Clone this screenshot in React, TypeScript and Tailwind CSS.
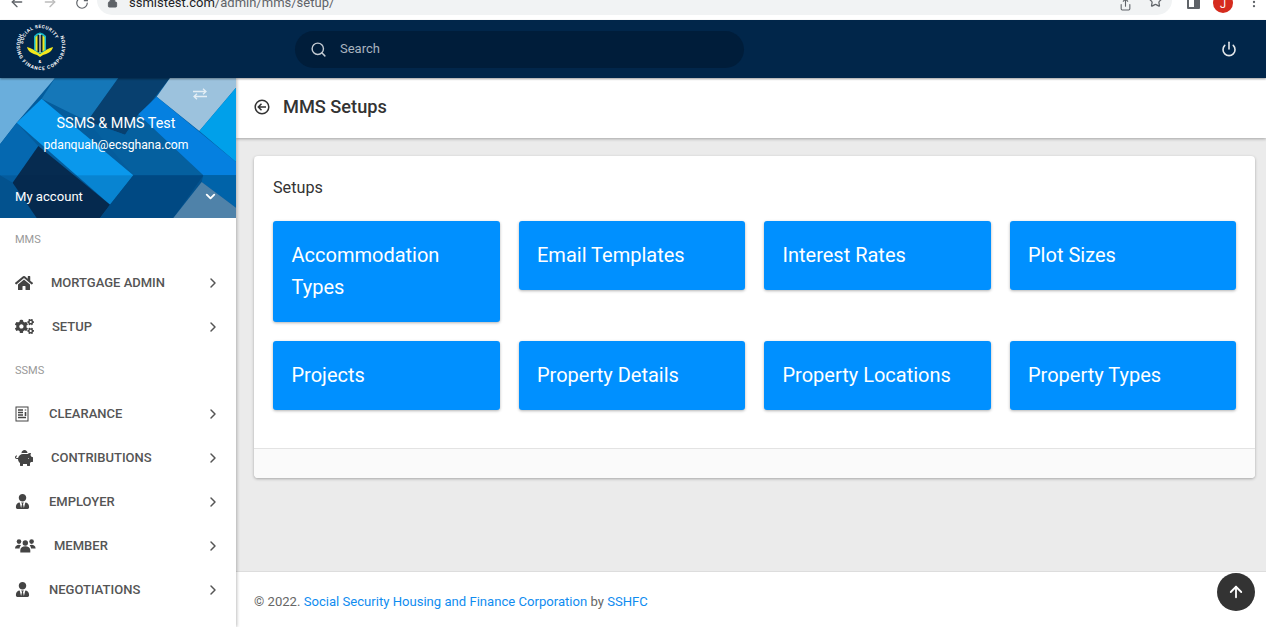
import React from "react";
import { FaHome, FaCogs, FaPiggyBank, FaUserTie } from "react-icons/fa";
import { ArrowUp, ChevronRight, ChevronDown, Search, Power, ArrowLeft, ArrowRight, RotateCw, Lock, Star, Share, MoreVertical } from "lucide-react";

function Logo() {
  return (
    <svg width="56" height="56" viewBox="0 0 56 56">
      <defs>
        <path id="outerRing" d="M8 12 A24.500 24.500 0 1 0 51 14" />
        <path id="topRing" d="M11 24 A17 17 0 0 1 45 24" />
      </defs>
      <path d="M15 26 C19 27 23 29 28 33 C33 29 37 27 41 26 C40 31 35 33 31 34 L28 36 L25 34 C21 33 16 31 15 26Z" fill="#f4e81c" />
      <path d="M22 29 V15 Q28 8 34 15 V29 L28 33Z" fill="#19b6c9" />
      <path d="M23.500 29 V16 Q28 11 32.500 16 V29 L28 32Z" fill="#f4e81c" />
      <rect x="25.500" y="14" width="5" height="17" fill="#0b1f2a" />
      <rect x="27.400" y="13" width="1.200" height="18" fill="#e8e8e8" />
      <text fontFamily="Roboto, sans-serif" fontSize="4.600" fontWeight="700" fill="#ffffff" letterSpacing="0.5">
        <textPath href="#topRing" startOffset="1">SOCIAL SECURITY</textPath>
      </text>
      <text fontFamily="Roboto, sans-serif" fontSize="4.800" fontWeight="700" fill="#ffffff" letterSpacing="0.9">
        <textPath href="#outerRing" startOffset="1">HOUSING FINANCE CORPORATION</textPath>
      </text>
      <text x="28" y="42" textAnchor="middle" fontFamily="Roboto, sans-serif" fontSize="4.400" fontWeight="700" fill="#ffffff">&amp;</text>
    </svg>
  );
}

function Banner() {
  return (
    <svg className="absolute inset-0" width="236" height="140" viewBox="0 0 708 420" preserveAspectRatio="none">
      <rect width="708" height="420" fill="#045c9c" />
      <polygon points="0,0 165,0 50,134 0,199" fill="#6aaedc" />
      <polygon points="165,0 355,0 262,130 125,62" fill="#1577b8" />
      <polygon points="355,0 510,0 375,170 262,130" fill="#08406f" />
      <polygon points="510,0 708,0 708,29 598,159 470,56" fill="#9cc2dd" />
      <polygon points="708,29 708,252 598,159" fill="#00a0ea" />
      <polygon points="262,130 375,170 415,109 610,292 400,292" fill="#05609f" />
      <polygon points="470,56 708,252 708,292 610,292 415,109" fill="#0580e0" />
      <polygon points="0,199 50,134 115,204 38,314 0,292" fill="#0568b0" />
      <polygon points="125,62 400,292 330,380 50,134" fill="#0a98ec" />
      <polygon points="115,204 330,380 300,420 110,420 38,314" fill="#062b50" />
      <polygon points="400,292 610,292 520,420 300,420 330,380" fill="#00518f" />
      <polygon points="610,292 708,292 708,389 605,312" fill="#0070bd" />
      <polygon points="605,312 708,389 708,420 520,420" fill="#5f95bd" />
      <rect y="292" width="708" height="128" fill="#001f44" fillOpacity="0.16" />
    </svg>
  );
}

function ListIcon() {
  return (
    <svg width="14" height="16" viewBox="0 0 14 16" fill="none" stroke="#444" strokeWidth="1">
      <rect x="1" y="1" width="12" height="14" />
      <path d="M3 4h5M3 6.500h5M3 9h5M3 11.500h8" strokeWidth="1.400" />
      <path d="M10.500 3.500v1M10.500 6v4" strokeWidth="1.600" />
    </svg>
  );
}

function MembersIcon() {
  return (
    <svg width="21" height="14" viewBox="0 0 21 14" fill="#444">
      <circle cx="4" cy="2.600" r="2.300" />
      <circle cx="16.600" cy="2.600" r="2.300" />
      <circle cx="10.300" cy="4" r="2.700" />
      <path d="M0 9.500C0 7 2 5.800 4 5.800c.8 0 1.500.2 2 .5-.8.8-1.400 2-1.400 3.200H0Z" />
      <path d="M20.600 9.500C20.600 7 18.600 5.800 16.600 5.800c-.8 0-1.500.2-2 .5.8.8 1.400 2 1.400 3.200h4.600Z" />
      <path d="M5.300 13.500V11c0-2.300 2.300-3.700 5-3.700s5 1.400 5 3.700v2.500Z" />
    </svg>
  );
}

type Item = { label: string; icon: React.ReactNode; gap: string; size: string };

const icon = "text-[#444]";
const items: Item[] = [
  { label: "MORTGAGE ADMIN", icon: <FaHome size={18} className={icon} />, gap: "ml-[18px]", size: "w-[18px]" },
  { label: "SETUP", icon: <FaCogs size={19} className={icon} />, gap: "ml-[18px]", size: "w-[19px]" },
];
const items2: Item[] = [
  { label: "CLEARANCE", icon: <ListIcon />, gap: "ml-[20px]", size: "w-[14px]" },
  { label: "CONTRIBUTIONS", icon: <FaPiggyBank size={18} className={icon} />, gap: "ml-[18px]", size: "w-[18px]" },
  { label: "EMPLOYER", icon: <FaUserTie size={15} className={icon} />, gap: "ml-[19px]", size: "w-[15px]" },
  { label: "MEMBER", icon: <MembersIcon />, gap: "ml-[18px]", size: "w-[21px]" },
  { label: "NEGOTIATIONS", icon: <FaUserTie size={15} className={icon} />, gap: "ml-[19px]", size: "w-[15px]" },
];

function NavItem({ it }: { it: Item }) {
  return (
    <div className="flex h-[44px] items-center pb-[1px] pl-[15px] pr-[15px] text-[13px] font-medium text-[#555]">
      <span className={`flex shrink-0 items-center ${it.size}`}>{it.icon}</span>
      <span className={it.gap}>{it.label}</span>
      <ChevronRight size={16} strokeWidth={2.200} className="ml-auto text-[#555]" />
    </div>
  );
}

function Section({ label }: { label: string }) {
  return <div className="flex h-[43px] items-center pl-[15px] pt-[2px] text-[11px] text-[#999]">{label}</div>;
}

const setups = [
  "Accommodation Types",
  "Email Templates",
  "Interest Rates",
  "Plot Sizes",
  "Projects",
  "Property Details",
  "Property Locations",
  "Property Types",
];

export default function App() {
  return (
    <div className="flex h-[627px] w-[1266px] flex-col overflow-hidden bg-white font-['Roboto',sans-serif]">
      {/* browser chrome */}
      <div className="flex h-[20px] shrink-0 items-end overflow-hidden bg-white text-[#5f6368]">
        <div className="flex h-[20px] w-[97px] shrink-0 -translate-y-[10px] items-end gap-[17px] pl-[9px]">
          <ArrowLeft size={16} strokeWidth={2} />
          <ArrowRight size={16} strokeWidth={2} className="text-[#bcbcbc]" />
          <RotateCw size={14} strokeWidth={2} />
        </div>
        <div className="flex h-[30px] w-[1075px] shrink-0 -translate-y-[5px] items-end rounded-[15px] bg-[#f1f3f4] pb-[4px] pl-[10px] pr-[9px] text-[13px] leading-[16px]">
          <Lock size={11} fill="#5f6368" className="mb-[3px]" />
          <span className="ml-[11px] text-[#202124]">ssmistest.com</span>
          <span>/admin/mms/setup/</span>
          <Share size={13} className="ml-auto" />
          <Star size={15} className="ml-[16px] mb-[3px]" />
        </div>
        <div className="flex h-[20px] flex-1 -translate-y-[11px] items-end pl-[15px]">
          <span className="h-[12px] w-[13px] rounded-[1px] border-2 border-[#5f6368] bg-[linear-gradient(90deg,white_55%,#5f6368_55%)]" />
          <span className="ml-[13px] flex h-[20px] w-[20px] translate-y-[4px] items-end justify-center rounded-full bg-[#d52b1e] pb-[2px] text-[11px] leading-[12px] text-white">J</span>
          <MoreVertical size={14} className="ml-[14px]" />
        </div>
      </div>
      {/* navbar */}
      <header className="z-20 flex h-[58px] shrink-0 items-center bg-[#01264a] shadow-[0_1px_2px_rgba(0,0,0,0.4)]">
        <div className="ml-[12px] w-[283px] shrink-0">
          <Logo />
        </div>
        <div className="flex h-[37px] w-[449px] items-center rounded-[19px] bg-[#001d3a] pl-[15px] text-[13px] text-[#a9b4bf]">
          <Search size={17} className="text-[#c3cbd3]" />
          <span className="ml-[13px]">Search</span>
        </div>
        <Power size={16} strokeWidth={2.400} className="ml-auto mr-[29px] text-[#e3e7ea]" />
      </header>
      <div className="flex min-h-0 flex-1">
        {/* sidebar */}
        <aside className="z-10 w-[236px] shrink-0 overflow-hidden bg-white shadow-[1px_0_3px_rgba(0,0,0,0.25)]">
          <div className="relative h-[140px] overflow-hidden text-white">
            <Banner />
            <div className="relative flex h-full flex-col">
              <svg className="absolute right-[29px] top-[10px]" width="14" height="12" viewBox="0 0 14 12" fill="none" stroke="#e4eef5" strokeWidth="1.300">
                <path d="M0 3.500h13M10 .7l3 2.800-3 2.800" />
                <path d="M14 8.500H1M4 5.700 1 8.500l3 2.800" />
              </svg>
              <div className="pr-[4px] pt-[37px] text-center text-[14.400px] leading-[18px]">SSMS &amp; MMS Test</div>
              <div className="pr-[4px] pt-[4px] text-center text-[12.200px] leading-[16px]">pdanquah@ecsghana.com</div>
              <div className="mt-auto flex h-[43px] items-center pl-[15px] pr-[18px] text-[13.100px]">
                <span>My account</span>
                <ChevronDown size={15} strokeWidth={3} className="ml-auto" />
              </div>
            </div>
          </div>
          <Section label="MMS" />
          {items.map((it) => <NavItem key={it.label} it={it} />)}
          <Section label="SSMS" />
          {items2.map((it) => <NavItem key={it.label} it={it} />)}
        </aside>
        {/* main */}
        <main className="flex min-w-0 flex-1 flex-col">
          <div className="z-[1] flex h-[60px] shrink-0 items-center bg-white pb-[3px] pl-[18px] shadow-[0_1px_3px_rgba(0,0,0,0.3)]">
            <svg width="16" height="16" viewBox="0 0 16 16" fill="none" stroke="#333" strokeWidth="1.500">
              <circle cx="8" cy="8" r="6.800" />
              <path d="M12 8H4.500M7.500 4.800 4.300 8l3.200 3.200" />
            </svg>
            <h1 className="ml-[13px] text-[18.200px] font-medium text-[#333]">MMS Setups</h1>
          </div>
          <div className="relative flex-1 bg-[#ebebeb] pl-[18px] pr-[11px] pt-[18px]">
            <section className="rounded-[4px] bg-white shadow-[0_1px_3px_rgba(0,0,0,0.3)]">
              <div className="px-[19px] pb-[38px] pt-[20px]">
                <h2 className="text-[16.200px] leading-[23px] text-[#333]">Setups</h2>
                <div className="mt-[22px] grid grid-cols-4 items-start gap-x-[19px] gap-y-[19px]">
                  {setups.map((s) => (
                    <div key={s} className="rounded-[3px] bg-[#0090ff] px-[18.500px] pb-[19px] pt-[18px] text-[20px] leading-[32px] text-white shadow-[0_1px_3px_rgba(0,0,0,0.3)]">
                      {s}
                    </div>
                  ))}
                </div>
              </div>
              <div className="h-[30px] rounded-b-[4px] border-t border-[#e3e3e3] bg-[#fafafa]" />
            </section>
          </div>
          <footer className="relative flex h-[56px] shrink-0 items-center border-t border-[#dddddd] bg-white pl-[18px] pt-[5px] text-[13.100px] text-[#666]">
            <span>© 2022.&nbsp;</span>
            <span className="text-[#0f8cf0]">Social Security Housing and Finance Corporation</span>
            <span>&nbsp;by&nbsp;</span>
            <span className="text-[#0f8cf0]">SSHFC</span>
            <button className="absolute right-[11px] top-[1px] flex h-[38px] w-[38px] items-center justify-center rounded-full bg-[#333333] text-white">
              <ArrowUp size={18} strokeWidth={2.400} />
            </button>
          </footer>
        </main>
      </div>
    </div>
  );
}
